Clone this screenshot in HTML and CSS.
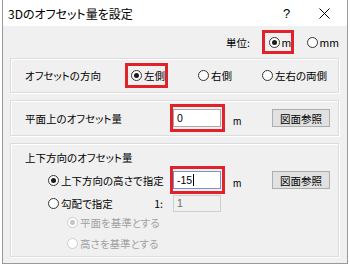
FILE: index.html
```html
<!DOCTYPE html>
<html lang="ja">
<head>
  <meta charset="UTF-8">
  <title>3Dのオフセット量を設定</title>
  <link rel="stylesheet" href="styles.css">
</head>
<body>
  <div class="window">
    <div class="titlebar">
      <span class="title">3Dのオフセット量を設定</span>
      <span class="help">?</span>
      <span class="close">
        <svg width="11" height="11" viewBox="0 0 11 11"><path d="M0.5 0.5 L10.5 10.5 M10.5 0.5 L0.5 10.5" stroke="#000" stroke-width="1" fill="none"/></svg>
      </span>
    </div>

    <div class="client">
      <div class="unit-row">
        <span class="unit-label">単位:</span>
        <span class="mark unit-mark"><span class="radio on"></span>m</span>
        <span class="opt"><span class="radio"></span>mm</span>
      </div>

      <div class="group g-dir">
        <span class="g-label">オフセットの方向</span>
        <span class="mark dir-mark"><span class="radio on"></span>左側</span>
        <span class="opt"><span class="radio"></span>右側</span>
        <span class="opt"><span class="radio"></span>左右の両側</span>
      </div>

      <div class="group g-plane">
        <div class="row">
          <span class="g-label">平面上のオフセット量</span>
          <span class="mark field-mark"><span class="field">0</span></span>
          <span class="unit">m</span>
          <button class="btn">図面参照</button>
        </div>
      </div>

      <div class="group g-vert">
        <div class="g-title">上下方向のオフセット量</div>
        <div class="row row-height">
          <span class="opt indent"><span class="radio on"></span>上下方向の高さで指定</span>
          <span class="mark field-mark"><span class="field focus">-15<span class="caret"></span></span></span>
          <span class="unit">m</span>
          <button class="btn">図面参照</button>
        </div>
        <div class="row row-slope">
          <span class="opt indent"><span class="radio"></span>勾配で指定<span class="ratio">1:</span></span>
          <span class="field-wrap"><span class="field off">1</span></span>
        </div>
        <div class="sub"><span class="opt dis"><span class="radio on"></span>平面を基準とする</span></div>
        <div class="sub"><span class="opt dis"><span class="radio"></span>高さを基準とする</span></div>
      </div>
    </div>
  </div>
</body>
</html>
```

FILE: styles.css
```css
body {
  margin: 0;
  background: #fff;
  font-family: "Noto Sans CJK JP", "Liberation Sans", sans-serif;
  font-size: 10.5px;
  font-feature-settings: "palt";
  color: #000;
}
.window {
  width: 346px;
  height: 264px;
  margin-left: 2px;
  box-sizing: border-box;
  border: 1px solid #9a9a9a;
  border-top: none;
  display: flex;
  flex-direction: column;
}
.titlebar {
  height: 26px;
  background: #fff;
  display: flex;
  align-items: center;
  font-size: 12px;
}
.title {
  padding-left: 5px;
  flex: 1;
}
.help {
  font-family: "Liberation Sans", sans-serif;
  font-size: 13px;
  width: 36px;
}
.close {
  width: 28px;
  height: 11px;
  display: flex;
}
.client {
  flex: 1;
  background: #f0f0f0;
  padding: 0 8px 0 7px;
}

/* unit selector */
.unit-row {
  height: 32px;
  display: flex;
  align-items: center;
  padding-left: 216px;
}
.unit-label {
  width: 39px;
}
.unit-mark {
  width: 32px;
  height: 24px;
  margin-right: 13px;
}

/* red highlight boxes */
.mark {
  box-sizing: border-box;
  border: 3px solid #e2222b;
  display: flex;
  align-items: center;
  white-space: nowrap;
}
.unit-mark, .dir-mark {
  padding-left: 4px;
}

/* radio buttons */
.opt {
  display: flex;
  align-items: center;
  white-space: nowrap;
}
.radio {
  flex: none;
  width: 11px;
  height: 11px;
  box-sizing: border-box;
  border: 1px solid #333;
  border-radius: 50%;
  background: #fff;
  margin-right: 2px;
  display: flex;
  align-items: center;
  justify-content: center;
}
.radio.on::after {
  content: "";
  width: 5px;
  height: 5px;
  border-radius: 50%;
  background: #1a1a1a;
}
.dis {
  color: #a0a0a0;
}
.dis .radio {
  border-color: #cccccc;
}
.dis .radio.on::after {
  background: #c4c4c4;
}

/* group boxes */
.group {
  box-sizing: border-box;
  border: 1px solid #dcdcdc;
  box-shadow: inset 1px 1px 0 #fff, 1px 1px 0 #fff;
  padding-left: 14px;
}
.g-dir {
  height: 35px;
  display: grid;
  grid-template-columns: 100px 73px 64px auto;
  align-items: center;
}
.dir-mark {
  width: 43px;
  height: 25px;
  padding-left: 3px;
}
.g-plane {
  height: 36px;
  margin-top: 7px;
  display: flex;
  align-items: center;
}
.g-vert {
  height: 114px;
  margin-top: 7px;
  padding-top: 7px;
}
.g-title {
  height: 14px;
  line-height: 14px;
  margin-bottom: 1px;
}

.row {
  display: grid;
  grid-template-columns: 145px 55px 47px 58px;
  align-items: center;
}
.row-height {
  height: 28px;
}
.row-slope {
  height: 18px;
}
.indent {
  padding-left: 23px;
}
.ratio {
  margin-left: auto;
  padding-right: 7px;
}
.sub {
  height: 21px;
  display: flex;
  align-items: center;
  padding-left: 42px;
}

/* text fields */
.field-mark {
  height: 28px;
  padding: 2px 0;
}
.field-wrap {
  padding-left: 3px;
}
.field {
  box-sizing: border-box;
  width: 48px;
  height: 18px;
  background: #fff;
  border: 1px solid #a9a9a9;
  padding-left: 3px;
  line-height: 16px;
  font-family: "Liberation Sans", sans-serif;
  display: flex;
  align-items: center;
}
.field.focus {
  border-color: #6f98c6;
}
.caret {
  width: 1px;
  height: 12px;
  background: #000;
  margin-left: 1px;
}
.field.off {
  height: 17px;
  background: #f0f0f0;
  border-color: #cfcfcf;
  color: #6d6d6d;
}
.unit {
  padding-left: 8px;
  padding-top: 6px;
  font-family: "Liberation Sans", sans-serif;
  font-size: 10px;
}

/* buttons */
.btn {
  width: 58px;
  height: 18px;
  padding: 0;
  background: #e1e1e1;
  border: 1px solid #adadad;
  font-family: inherit;
  font-size: 10.5px;
  font-feature-settings: "palt";
  color: #000;
}
```
